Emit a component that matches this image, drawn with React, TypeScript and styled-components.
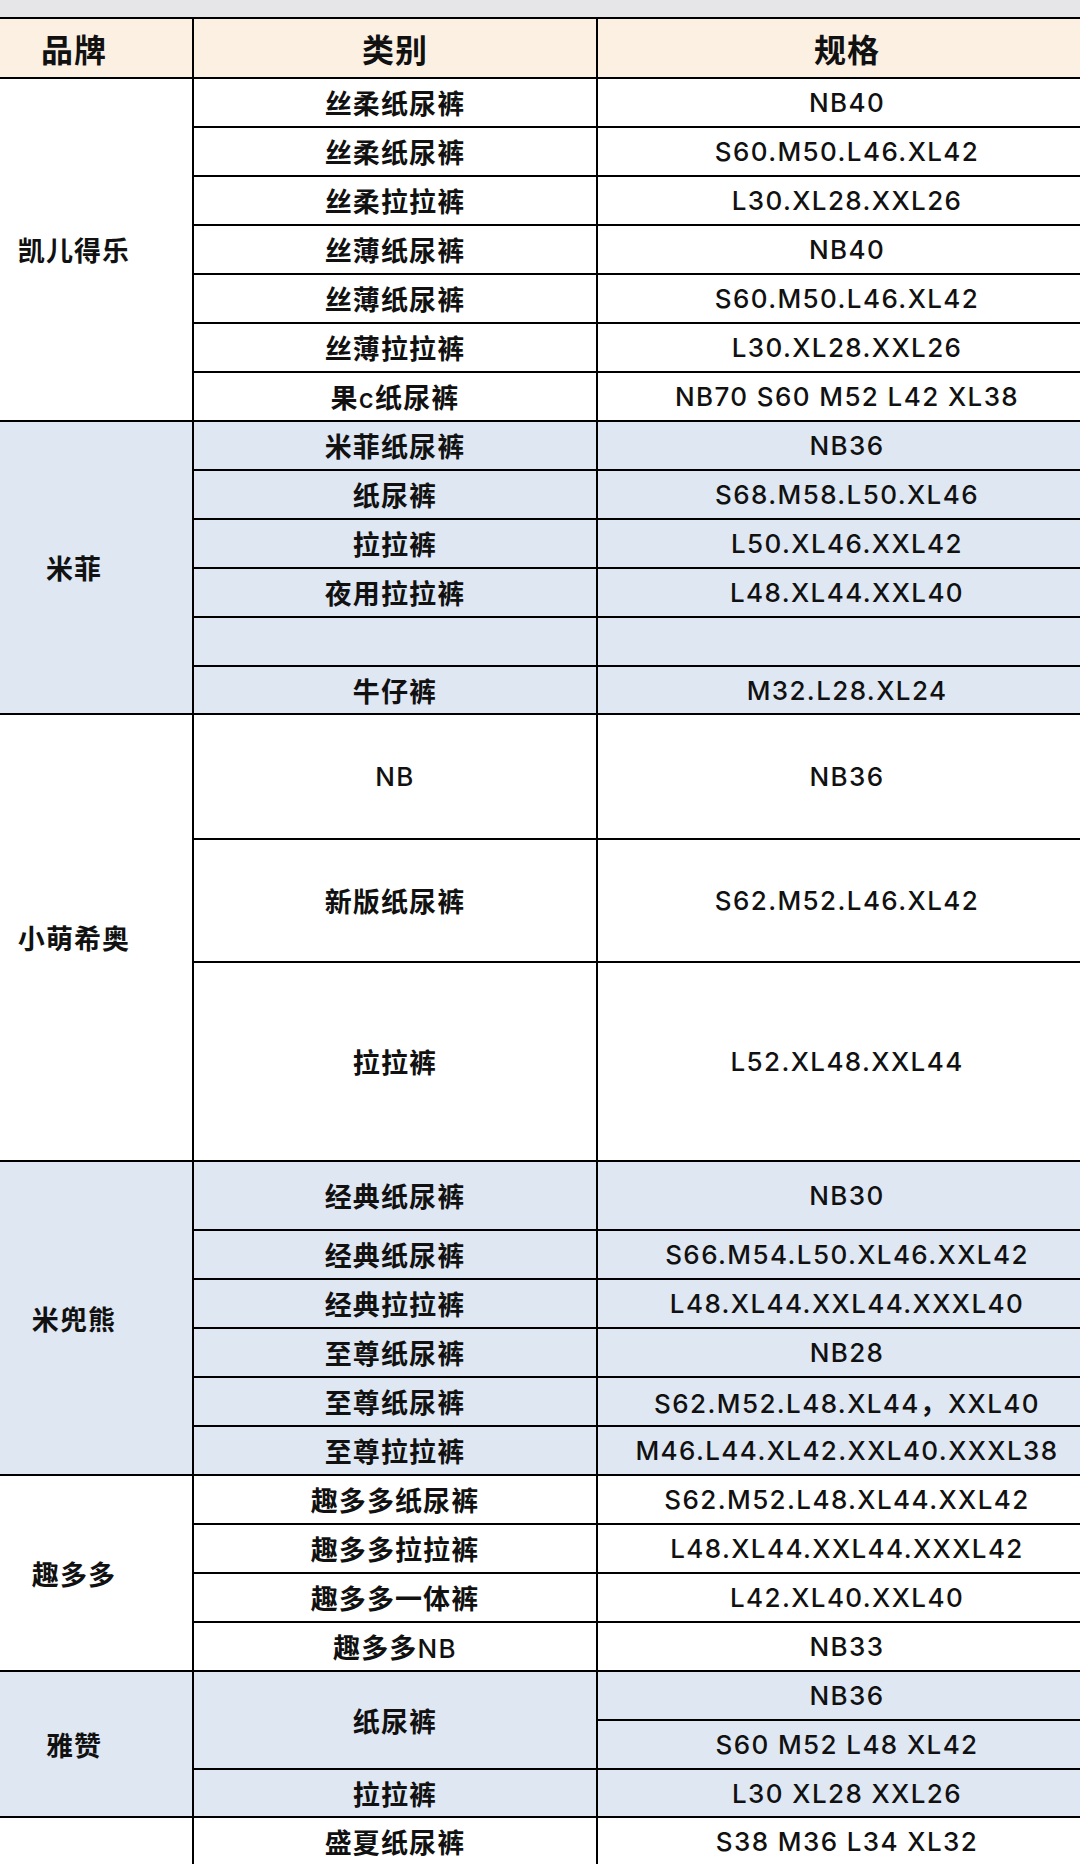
import * as React from "react"
import styled, { createGlobalStyle } from "styled-components"

const GlobalStyle = createGlobalStyle`
  html, body {
    margin: 0;
    padding: 0;
    background: #fff;
    overflow: hidden;
  }
  body {
    width: 1080px;
    height: 1864px;
    font-family: "Inter", "Liberation Sans", "Noto Sans CJK SC", sans-serif;
    color: #111;
  }
`;

const Page = styled.main`
  width: 1080px;
  height: 1864px;
  overflow: hidden;
`;

const TopBar = styled.div`
  height: 17px;
  background: #e6e6e8;
`;

const SheetTable = styled.table`
  width: 1142px;
  margin-left: -46px;
  table-layout: fixed;
  border-collapse: collapse;
  font-size: 26px;
  letter-spacing: 1.4px;
  font-weight: 500;
`;

const HeadCell = styled.th`
  height: 58px;
  padding: 0;
  background: #fbf0e1;
  border: 2px solid #000;
  font-size: 32px;
  font-weight: 700;
  letter-spacing: 1px;
  text-align: center;
  vertical-align: middle;
  font-family: "Noto Sans CJK SC", sans-serif;
`;

const Cell = styled.td<{ $tone: "white" | "blue"; $h?: number }>`
  height: ${(p) => (p.$h ?? 49) - 2}px;
  padding: 0;
  background: ${(p) => (p.$tone === "blue" ? "#dfe7f3" : "#ffffff")};
  border: 2px solid #000;
  text-align: center;
  vertical-align: middle;
  white-space: nowrap;
`;

// CJK runs get the heavier Noto face, Latin runs stay at medium weight
const Run = styled.span<{ $cjk: boolean }>`
  font-family: ${(p) => (p.$cjk ? `"Noto Sans CJK SC", sans-serif` : `"Inter", "Liberation Sans", sans-serif`)};
  font-weight: ${(p) => (p.$cjk ? 600 : 500)};
  font-size: ${(p) => (p.$cjk ? "27px" : "26px")};
  letter-spacing: ${(p) => (p.$cjk ? "1.1px" : "1.4px")};
`;

const Label = ({ text }: { text: string }) => (
  <>
    {text
      .split(/([\u3000-\u9fff\uff00-\uffef]+)/)
      .filter(Boolean)
      .map((part, i) => (
        <Run key={i} $cjk={/[\u3000-\u9fff\uff00-\uffef]/.test(part)}>
          {part}
        </Run>
      ))}
  </>
);

type Item = { name: string; specs: string[]; heights?: number[] };
type Group = { brand: string; tone: "white" | "blue"; items: Item[] };

const groups: Group[] = [
  {
    brand: "凯儿得乐",
    tone: "white",
    items: [
      { name: "丝柔纸尿裤", specs: ["NB40"] },
      { name: "丝柔纸尿裤", specs: ["S60.M50.L46.XL42"] },
      { name: "丝柔拉拉裤", specs: ["L30.XL28.XXL26"] },
      { name: "丝薄纸尿裤", specs: ["NB40"] },
      { name: "丝薄纸尿裤", specs: ["S60.M50.L46.XL42"] },
      { name: "丝薄拉拉裤", specs: ["L30.XL28.XXL26"] },
      { name: "果c纸尿裤", specs: ["NB70 S60 M52 L42 XL38"] },
    ],
  },
  {
    brand: "米菲",
    tone: "blue",
    items: [
      { name: "米菲纸尿裤", specs: ["NB36"] },
      { name: "纸尿裤", specs: ["S68.M58.L50.XL46"] },
      { name: "拉拉裤", specs: ["L50.XL46.XXL42"] },
      { name: "夜用拉拉裤", specs: ["L48.XL44.XXL40"] },
      { name: "", specs: [""] },
      { name: "牛仔裤", specs: ["M32.L28.XL24"], heights: [48] },
    ],
  },
  {
    brand: "小萌希奥",
    tone: "white",
    items: [
      { name: "NB", specs: ["NB36"], heights: [125] },
      { name: "新版纸尿裤", specs: ["S62.M52.L46.XL42"], heights: [123] },
      { name: "拉拉裤", specs: ["L52.XL48.XXL44"], heights: [199] },
    ],
  },
  {
    brand: "米兜熊",
    tone: "blue",
    items: [
      { name: "经典纸尿裤", specs: ["NB30"], heights: [69] },
      { name: "经典纸尿裤", specs: ["S66.M54.L50.XL46.XXL42"] },
      { name: "经典拉拉裤", specs: ["L48.XL44.XXL44.XXXL40"] },
      { name: "至尊纸尿裤", specs: ["NB28"] },
      { name: "至尊纸尿裤", specs: ["S62.M52.L48.XL44，XXL40"] },
      { name: "至尊拉拉裤", specs: ["M46.L44.XL42.XXL40.XXXL38"] },
    ],
  },
  {
    brand: "趣多多",
    tone: "white",
    items: [
      { name: "趣多多纸尿裤", specs: ["S62.M52.L48.XL44.XXL42"] },
      { name: "趣多多拉拉裤", specs: ["L48.XL44.XXL44.XXXL42"] },
      { name: "趣多多一体裤", specs: ["L42.XL40.XXL40"] },
      { name: "趣多多NB", specs: ["NB33"] },
    ],
  },
  {
    brand: "雅赞",
    tone: "blue",
    items: [
      { name: "纸尿裤", specs: ["NB36", "S60 M52 L48 XL42"] },
      { name: "拉拉裤", specs: ["L30 XL28 XXL26"], heights: [48] },
    ],
  },
  {
    brand: "",
    tone: "white",
    items: [{ name: "盛夏纸尿裤", specs: ["S38 M36 L34 XL32"] }],
  },
];

export default function App() {
  return (
    <Page>
      <GlobalStyle />
      <TopBar />
      <SheetTable>
        <colgroup>
          <col style={{ width: 238 }} />
          <col style={{ width: 404 }} />
          <col style={{ width: 500 }} />
        </colgroup>
        <thead>
          <tr>
            <HeadCell>品牌</HeadCell>
            <HeadCell>类别</HeadCell>
            <HeadCell>规格</HeadCell>
          </tr>
        </thead>
        <tbody>
          {groups.map((group) => {
            const total = group.items.reduce((n, it) => n + it.specs.length, 0);
            return group.items.flatMap((item, i) =>
              item.specs.map((spec, j) => {
                const h = item.heights?.[j] ?? 49;
                return (
                  <tr key={`${group.brand}-${i}-${j}`}>
                    {i === 0 && j === 0 && (
                      <Cell $tone={group.tone} $h={h} rowSpan={total}>
                        <Label text={group.brand} />
                      </Cell>
                    )}
                    {j === 0 && (
                      <Cell $tone={group.tone} $h={h} rowSpan={item.specs.length}>
                        <Label text={item.name} />
                      </Cell>
                    )}
                    <Cell $tone={group.tone} $h={h}>
                      <Label text={spec} />
                    </Cell>
                  </tr>
                );
              })
            );
          })}
        </tbody>
      </SheetTable>
    </Page>
  );
}
